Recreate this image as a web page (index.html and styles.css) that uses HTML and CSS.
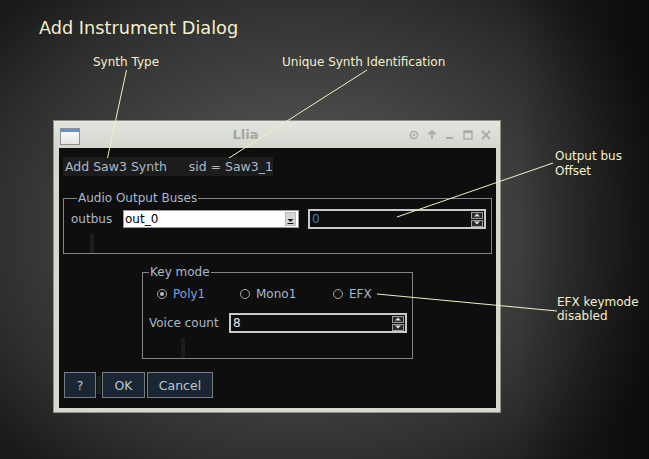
FILE: index.html
```html
<!DOCTYPE html>
<html>
<head>
<meta charset="utf-8">
<link rel="stylesheet" href="styles.css">
</head>
<body>
<div class="page">
  <h1 class="heading">Add Instrument Dialog</h1>

  <div class="win">
    <div class="titlebar">
      <div class="appicon"><div class="appicon-bar"></div></div>
      <div class="wtitle">Llia</div>
      <div class="wbtns">
        <svg class="wbtn" viewBox="0 0 10 10"><circle cx="5" cy="5" r="3.6" fill="none" stroke="#a9aba5" stroke-width="1.5"/><circle cx="5" cy="5" r="1.2" fill="#a9aba5"/></svg>
        <svg class="wbtn" viewBox="0 0 10 10"><path d="M5 1 L5 9 M1.5 4.5 L5 1 L8.5 4.5" fill="none" stroke="#a9aba5" stroke-width="1.8"/></svg>
        <svg class="wbtn" viewBox="0 0 10 10"><rect x="1" y="7" width="7" height="2" fill="#a9aba5"/></svg>
        <svg class="wbtn" viewBox="0 0 10 10"><rect x="1" y="1" width="8" height="8" fill="none" stroke="#a9aba5" stroke-width="1.4"/><rect x="1" y="1" width="8" height="2" fill="#a9aba5"/></svg>
        <svg class="wbtn" viewBox="0 0 10 10"><path d="M1 1 L9 9 M9 1 L1 9" stroke="#a9aba5" stroke-width="1.8"/></svg>
      </div>
    </div>
    <div class="content">
      <div class="hdr"><span class="hdr-type">Add Saw3 Synth</span><span>sid = Saw3_1</span></div>

      <div class="lf lf-audio">
        <div class="lf-title">Audio Output Buses</div>
        <div class="row">
          <span class="lbl lbl-outbus">outbus</span>
          <div class="combo"><span>out_0</span>
            <div class="combo-btn"><svg viewBox="0 0 9 9" width="9" height="9"><path d="M1.5 4 L7.5 4 L4.5 7 Z" fill="#111"/><rect x="1.5" y="8" width="6" height="1" fill="#111"/></svg></div>
          </div>
          <div class="spin spin-offset"><span class="spin-val blue">0</span>
            <div class="spin-btns">
              <div class="sb"><svg viewBox="0 0 10 6" width="10" height="6"><path d="M2 4.5 L8 4.5 L5 1.5 Z" fill="#ddd"/></svg></div>
              <div class="sb"><svg viewBox="0 0 10 6" width="10" height="6"><path d="M2 1.5 L8 1.5 L5 4.5 Z" fill="#ddd"/></svg></div>
            </div>
          </div>
        </div>
        <div class="stub stub-audio"></div>
      </div>

      <div class="lf lf-key">
        <div class="lf-title">Key mode</div>
        <div class="radios">
          <div class="radio r1"><span class="dot on"></span><span class="sel">Poly1</span></div>
          <div class="radio r2"><span class="dot"></span><span>Mono1</span></div>
          <div class="radio"><span class="dot"></span><span>EFX</span></div>
        </div>
        <div class="row row-voice">
          <span class="lbl lbl-voice">Voice count</span>
          <div class="spin spin-voice"><span class="spin-val white">8</span>
            <div class="spin-btns">
              <div class="sb"><svg viewBox="0 0 10 6" width="10" height="6"><path d="M2 4.5 L8 4.5 L5 1.5 Z" fill="#ddd"/></svg></div>
              <div class="sb"><svg viewBox="0 0 10 6" width="10" height="6"><path d="M2 1.5 L8 1.5 L5 4.5 Z" fill="#ddd"/></svg></div>
            </div>
          </div>
        </div>
        <div class="stub stub-key"></div>
      </div>

      <div class="buttons">
        <div class="btn btn-help">?</div>
        <div class="btn-sep"></div>
        <div class="btn btn-ok">OK</div>
        <div class="btn btn-cancel">Cancel</div>
      </div>
    </div>
  </div>

  <div class="callout c-type">Synth Type</div>
  <div class="callout c-sid">Unique Synth Identification</div>
  <div class="callout c-bus">Output bus<br>Offset</div>
  <div class="callout c-efx">EFX keymode<br>disabled</div>

  <svg class="lines" width="649" height="459" viewBox="0 0 649 459">
    <g stroke="#f2efc2" stroke-width="1" fill="none">
      <line x1="126.5" y1="70" x2="107.5" y2="158"/>
      <line x1="367" y1="70" x2="229" y2="158"/>
      <line x1="553" y1="163" x2="397" y2="217"/>
      <line x1="377" y1="294" x2="557" y2="311"/>
    </g>
  </svg>
</div>
</body>
</html>
```
FILE: styles.css
```css
* { box-sizing: border-box; }
html, body { margin: 0; padding: 0; }
body {
  width: 649px;
  height: 459px;
  overflow: hidden;
  font-family: "DejaVu Sans", "Liberation Sans", sans-serif;
}
.page {
  position: relative;
  width: 649px;
  height: 459px;
  overflow: hidden;
  background:
    linear-gradient(to right, rgba(0,0,0,0) 0%, rgba(0,0,0,0) 80%, rgba(0,0,0,0.55) 100%),
    radial-gradient(ellipse 62% 68% at 46% 50%, #585858 0%, #474747 40%, #2e2e2e 78%, #1a1a1a 100%);
  padding-top: 1px;
}
.heading {
  margin: 16px 0 0 39px;
  font-size: 17.7px;
  line-height: 22px;
  font-weight: normal;
  color: #f3efcd;
}
.win {
  margin: 81px 0 0 53px;
  width: 448px;
  height: 293px;
  background: #d5d7d1;
  border: 1px solid #8e908a;
  padding: 0 4px 4px 5px;
  display: flex;
  flex-direction: column;
}
.titlebar {
  height: 27px;
  display: flex;
  align-items: center;
  background: linear-gradient(#e3e5df, #d3d5cf);
  margin: 0 -4px 0 -5px;
  padding: 0 9px 0 6px;
}
.appicon {
  width: 20px;
  height: 17px;
  margin-top: 3px;
  border: 1px solid #8f918c;
  background: linear-gradient(#ffffff, #e4e5e2);
}
.appicon-bar { height: 3px; background: #6b8ec9; }
.wtitle {
  flex: 1;
  text-align: center;
  font-weight: bold;
  font-size: 13px;
  color: #a5a8a0;
  margin-left: 2px;
}
.wbtns { display: flex; gap: 8px; align-items: center; }
.wbtn { width: 10px; height: 10px; display: block; }

.content {
  flex: 1;
  background: #0e0e0e;
  padding: 9px 0 0 4px;
  color: #a9b9cb;
  font-size: 12px;
  white-space: nowrap;
}
.hdr {
  width: 210px;
  height: 19px;
  background: #1c1c1c;
  display: flex;
  align-items: center;
  padding-left: 2px;
  line-height: 19px;
  font-size: 12.5px;
}
.hdr-type { width: 125px; }

.lf {
  border: 1px solid #858585;
}
.lf-title {
  display: block;
  width: fit-content;
  margin: -8px 0 0 6px;
  padding: 0 1px;
  line-height: 15px;
  background: #0e0e0e;
}
.lf-audio {
  margin-top: 22px;
  width: 429px;
  padding: 0 4px 0 7px;
}
.row { display: flex; align-items: center; }
.lf-audio .row { margin-top: 3px; }
.lbl-outbus { width: 52px; }
.combo {
  width: 176px;
  height: 18px;
  background: #fff;
  border: 1px solid #9a9a9a;
  color: #000;
  display: flex;
  align-items: center;
  padding-left: 1px;
}
.combo span { flex: 1; }
.combo-btn {
  width: 11px;
  height: 14px;
  margin-right: 2px;
  background: #d6d6d6;
  border: 1px solid #b8b8b8;
  display: flex;
  align-items: flex-end;
  justify-content: center;
  padding-bottom: 1px;
}
.combo-btn svg { display: block; }
.spin {
  height: 20px;
  border: 2px solid #c9c9c9;
  background: #0e0e0e;
  display: flex;
  align-items: center;
  padding-left: 2px;
}
.spin-offset { width: 178px; margin-left: 9px; }
.spin-val { flex: 1; }
.blue { color: #3f7cc6; }
.white { color: #e6e6e6; }
.spin-btns {
  display: flex;
  flex-direction: column;
  gap: 1px;
  margin-right: 1px;
}
.sb {
  width: 12px;
  height: 7px;
  border: 1px solid #9e9e9e;
  background: #2a2a2a;
  display: flex;
  align-items: center;
  justify-content: center;
}
.sb svg { display: block; }
.stub { width: 4px; background: #1d1d1d; }
.stub-audio { height: 19px; margin: 5px 0 0 19px; }

.lf-key {
  margin: 18px 0 0 79px;
  width: 271px;
}
.radios {
  display: flex;
  align-items: center;
  height: 16px;
  margin-top: 6px;
  padding-left: 14px;
}
.radio { display: flex; align-items: center; gap: 6px; }
.r1 { width: 83px; }
.r2 { width: 93px; }
.dot {
  width: 10px;
  height: 10px;
  border-radius: 50%;
  border: 1px solid #a9a9a9;
  display: flex;
  align-items: center;
  justify-content: center;
}
.dot.on::after {
  content: "";
  width: 4px;
  height: 4px;
  border-radius: 50%;
  background: #bfbfbf;
}
.sel { color: #79a3d9; }
.row-voice { margin-top: 11px; padding-left: 6px; }
.lbl-voice { width: 80px; }
.spin-voice { width: 178px; }
.stub-key { height: 20px; margin: 5px 0 0 38px; }

.buttons {
  display: flex;
  align-items: center;
  margin-top: 13px;
  margin-left: 1px;
  font-size: 12.5px;
}
.btn {
  height: 26px;
  border: 1px solid #777c82;
  background: #1a2633;
  color: #bcc6cf;
  display: flex;
  align-items: center;
  justify-content: center;
}
.btn-help { width: 32px; }
.btn-sep { width: 4px; height: 18px; background: #1f1f1f; margin: 0 1px; }
.btn-ok { width: 43px; }
.btn-cancel { width: 66px; margin-left: 2px; }

.callout {
  position: absolute;
  color: #f3efcd;
  font-size: 12px;
  line-height: 15px;
  white-space: nowrap;
}
.c-type { left: 93px; top: 55px; }
.c-sid { left: 282px; top: 55px; }
.c-bus { left: 555px; top: 149px; }
.c-efx { left: 557px; top: 295px; line-height: 14px; }
.lines {
  position: absolute;
  left: 0;
  top: 0;
  pointer-events: none;
}
```
